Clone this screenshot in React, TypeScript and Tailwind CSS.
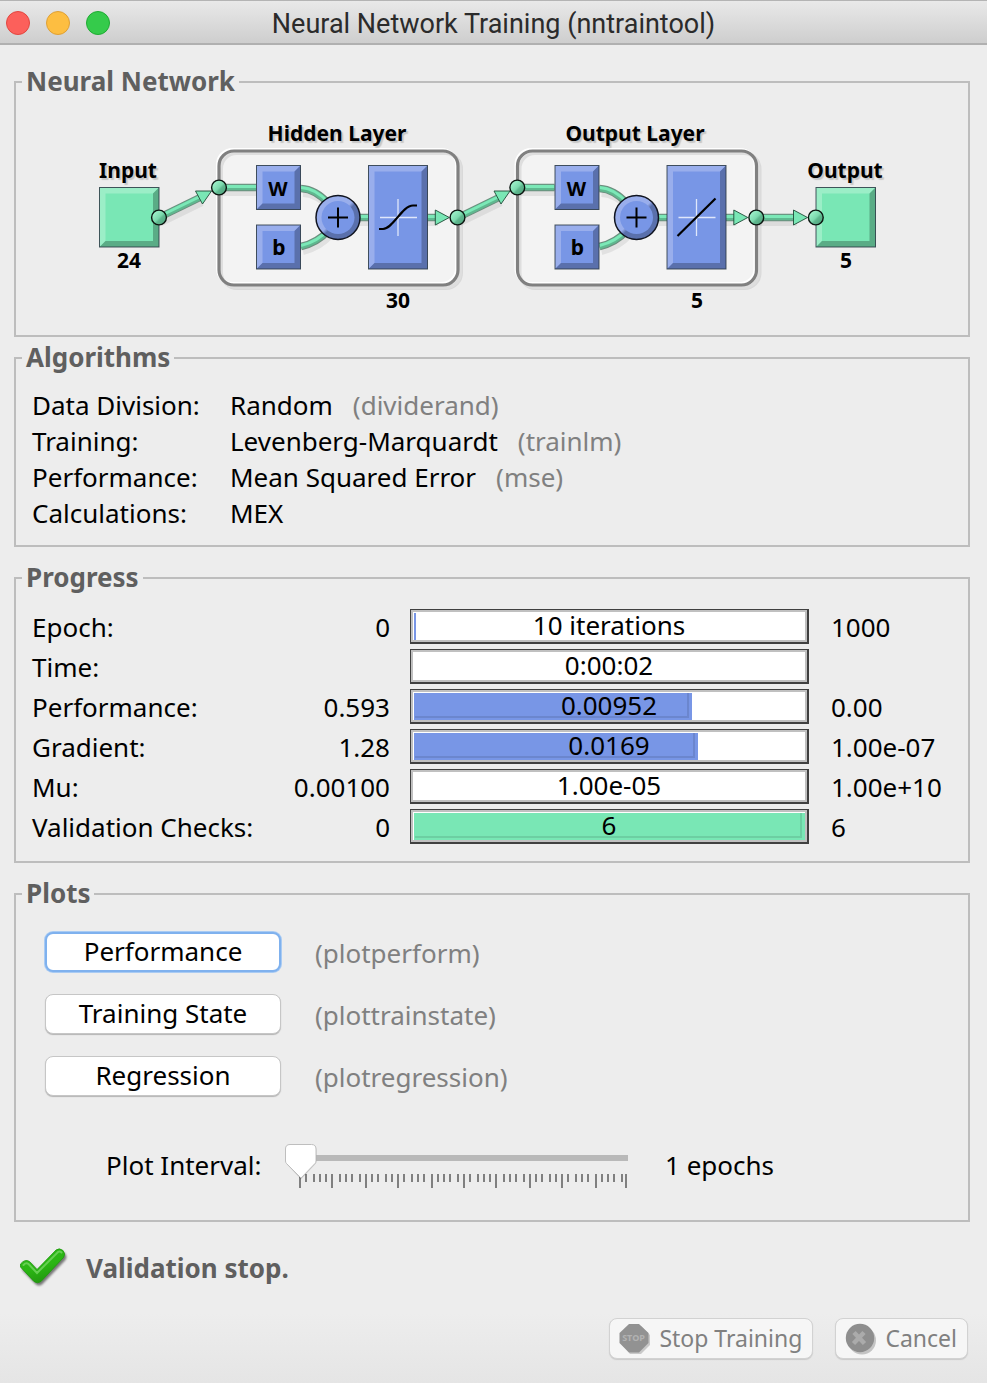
import { useState } from "react";
import type { ReactNode } from "react";

const GREEN = { main: "#79e7b5", light: "#9beec7", dark: "#5aac86" };
const BLUE = { main: "#7896e6", light: "#99aeec", dark: "#5a70ac" };
type Tone = typeof GREEN;

function Panel({ title, className, children }: { title: string; className: string; children: ReactNode }) {
  return (
    <fieldset className={`min-w-0 border-2 border-[#bdbdbd] ${className}`}>
      <legend className="ml-[6px] px-1 pb-[2px] text-[26px] leading-7 font-bold text-[#5f5f5f]">{title}</legend>
      {children}
    </fieldset>
  );
}

function Bevel({ x, y, w, h, tone }: { x: number; y: number; w: number; h: number; tone: Tone }) {
  const b = 6;
  return (
    <g>
      <rect x={x} y={y} width={w} height={h} fill={tone.main} />
      <polygon
        fill={tone.light}
        points={`${x},${y} ${x + w},${y} ${x + w - b},${y + b} ${x + b},${y + b} ${x + b},${y + h - b} ${x},${y + h}`}
      />
      <polygon
        fill={tone.dark}
        points={`${x + w},${y + h} ${x + w},${y} ${x + w - b},${y + b} ${x + w - b},${y + h - b} ${x + b},${y + h - b} ${x},${y + h}`}
      />
      <rect x={x} y={y} width={w} height={h} fill="none" stroke="#2c3a44" strokeOpacity="0.85" />
    </g>
  );
}

function Pipe({ d }: { d: string }) {
  return (
    <g fill="none">
      <path d={d} stroke="#000" strokeOpacity="0.07" strokeWidth="7" transform="translate(2 5)" />
      <path d={d} stroke="#6d8c7e" strokeWidth="7.5" />
      <path d={d} stroke="#5fb88f" strokeWidth="5.5" />
      <path d={d} stroke="#7be8b7" strokeWidth="3" transform="translate(0 -1)" />
    </g>
  );
}

function Knob({ x, y }: { x: number; y: number }) {
  return <circle cx={x} cy={y} r="7.4" fill="url(#knob)" stroke="#0b1510" strokeWidth="1.4" />;
}

function Arrow({ points }: { points: string }) {
  return <polygon points={points} fill="#79e7b5" stroke="#1f4a37" strokeWidth="0.9" />;
}

function Caption({ x, y, children }: { x: number; y: number; children: string }) {
  return (
    <text x={x} y={y} textAnchor="middle" fontSize="21" fontWeight="700" className="[text-shadow:2px_2px_1px_rgba(0,0,0,0.16)]">
      {children}
    </text>
  );
}

function Layer({ x, curve }: { x: number; curve: string }) {
  return (
    <g transform={`translate(${x} 0)`}>
      <rect x="222" y="154" width="239" height="134" rx="15" fill="none" stroke="#d9d9d9" strokeWidth="4" />
      <rect x="219" y="151" width="239" height="134" rx="15" fill="#f3f3f3" />
      <rect x="221.5" y="153.5" width="239" height="134" rx="15" fill="none" stroke="#dedede" strokeWidth="3" />
      <rect x="217.5" y="149.5" width="239" height="134" rx="15" fill="none" stroke="#fff" strokeWidth="3" />
      <rect x="219" y="151" width="239" height="134" rx="15" fill="none" stroke="#808080" strokeWidth="3.2" />
      <Pipe d="M219 187.5H256" />
      <Pipe d="M301 188.5C312 189 320 194 329 204" />
      <Pipe d="M301 246.5C312 244 320 240 329 230" />
      <Pipe d="M358 217.5H436" />
      <Bevel x={256.5} y={165.5} w={44} h={44} tone={BLUE} />
      <Bevel x={256.5} y={225} w={44} h={44} tone={BLUE} />
      <Bevel x={368.5} y={165.5} w={59} h={103.5} tone={BLUE} />
      <circle cx="338" cy="217.5" r="22" fill="url(#sum)" stroke="#101420" strokeWidth="1.5" />
      <circle cx="338" cy="217.5" r="16.5" fill="#7896e6" />
      <path d="M328 217.5h20M338 207.5v20" stroke="#000" strokeWidth="2" />
      <path d="M380 217.5h37M398 199v37" stroke="#dfe7fb" strokeWidth="1.3" />
      <path d={curve} stroke="#000" strokeWidth="2.2" fill="none" />
      <text x="278" y="196" textAnchor="middle" fontSize="20" fontWeight="700">W</text>
      <text x="279" y="255" textAnchor="middle" fontSize="21" fontWeight="700">b</text>
      <Arrow points="435.3,210 435.3,225 449.3,217.5" />
    </g>
  );
}

function NetworkDiagram() {
  return (
    <svg viewBox="92 97 800 238" className="mx-auto block h-[238px] w-full max-w-[800px]" role="img" aria-label="Network structure">
      <defs>
        <linearGradient id="knob" x1="0" y1="0" x2="1" y2="1">
          <stop offset="0.2" stopColor="#9beec7" />
          <stop offset="0.5" stopColor="#7bd9ad" />
          <stop offset="0.6" stopColor="#5fb88f" />
          <stop offset="1" stopColor="#4f9e7a" />
        </linearGradient>
        <linearGradient id="sum" x1="0" y1="0" x2="1" y2="1">
          <stop offset="0.48" stopColor="#99aeec" />
          <stop offset="0.54" stopColor="#5a70ac" />
        </linearGradient>
      </defs>
      <Layer x={0} curve="M379 229h4C393 229 402 205.500 413 205.500h4" />
      <Layer x={298.5} curve="M379 236L417 198.500" />
      <Bevel x={99.5} y={187.5} w={59.5} h={59.5} tone={GREEN} />
      <Bevel x={816} y={187.5} w={59.5} h={59.5} tone={GREEN} />
      <Pipe d="M159 217.500L200 197.500" />
      <Pipe d="M458 217.500L499 197.500" />
      <Pipe d="M756.500 217.500H795" />
      <Arrow points="195.5,191 211.500,191 202.500,204" />
      <Arrow points="494,191 510,191 501,204" />
      <Arrow points="793.5,210 793.5,225 807.5,217.5" />
      <Knob x={159} y={217.5} />
      <Knob x={219} y={187.5} />
      <Knob x={457.5} y={217.5} />
      <Knob x={517.3} y={187.5} />
      <Knob x={756.3} y={217.5} />
      <Knob x={815.8} y={217.5} />
      <Caption x={337} y={141}>Hidden Layer</Caption>
      <Caption x={635} y={141}>Output Layer</Caption>
      <Caption x={128} y={178}>Input</Caption>
      <Caption x={845} y={178}>Output</Caption>
      <g fontSize="21" fontWeight="700" textAnchor="middle">
        <text x="129" y="268">24</text>
        <text x="398" y="308">30</text>
        <text x="697" y="308">5</text>
        <text x="846" y="268">5</text>
      </g>
    </svg>
  );
}

const algorithms = [
  { name: "Data Division:", value: "Random", fn: "(dividerand)" },
  { name: "Training:", value: "Levenberg-Marquardt", fn: "(trainlm)" },
  { name: "Performance:", value: "Mean Squared Error", fn: "(mse)" },
  { name: "Calculations:", value: "MEX", fn: "" },
];

const progress = [
  { name: "Epoch:", from: "0", text: "10 iterations", to: "1000", fill: 0.5, done: false },
  { name: "Time:", from: "", text: "0:00:02", to: "", fill: 0, done: false },
  { name: "Performance:", from: "0.593", text: "0.00952", to: "0.00", fill: 71, done: false },
  { name: "Gradient:", from: "1.28", text: "0.0169", to: "1.00e-07", fill: 72.6, done: false },
  { name: "Mu:", from: "0.00100", text: "1.00e-05", to: "1.00e+10", fill: 0, done: false },
  { name: "Validation Checks:", from: "0", text: "6", to: "6", fill: 100, done: true },
];

function Bar({ text, fill, done }: { text: string; fill: number; done: boolean }) {
  return (
    <div className="h-[35px] border-t border-r-2 border-b-2 border-l border-[#404040]">
      <div className="relative h-full border-2 border-[#c0c0c0] bg-white pt-px pl-px">
        <div className={`relative h-full ${done ? "bg-[#79e7b5]" : "bg-[#7896e6]"}`} style={{ width: `${fill}%` }}>
          {fill > 1 && <div className="absolute top-0 right-[3px] bottom-[2px] left-px border-r-2 border-b-2 border-black/10" />}
        </div>
        <span className="absolute inset-0 text-center leading-[27px] text-black">{text}</span>
      </div>
    </div>
  );
}

const ticks = [
  14, 20, 28, 34, 40, 46, 54, 60, 66, 74, 80, 86, 92, 100, 106, 112, 118, 126, 132, 138, 146, 152, 158, 164, 172, 178,
  184, 192, 198, 204, 210, 218, 224, 230, 238, 244, 250, 256, 264, 270, 276, 282, 290, 296, 302, 310, 316, 322, 328,
  336, 340,
];

function IntervalSlider({ value, onChange }: { value: number; onChange: (v: number) => void }) {
  const shift = ((value - 1) / 50) * 326;
  return (
    <div className="relative h-[46px] w-[343px]">
      <svg viewBox="0 0 343 46" className="block h-full w-full" aria-hidden="true">
        <rect x="14" y="12" width="329" height="6" fill="#b9b9b9" />
        {ticks.map((x, i) => (
          <rect key={x} x={x} y="31" width="2" height={i % 5 === 0 ? 14 : 8} fill="#808080" />
        ))}
        <g transform={`translate(${shift} 0)`}>
          <path d="M5.500 2.500H26.500Q31.500 2.500 31.500 7.500V18Q31.500 20 30 21.500L16 36.500L2 21.500Q0.500 20 0.500 18V7.500Q0.500 2.500 5.500 2.500Z" fill="#000" fillOpacity="0.14" />
          <path d="M5 1.500H26.500Q31 1.500 31 6V18Q31 19.500 30 20.500L16 35L1.500 20.500Q0.500 19.500 0.500 18V6Q0.500 1.500 5 1.500Z" fill="#fff" stroke="#bebebe" />
        </g>
      </svg>
      <input
        id="interval"
        type="range"
        min={1}
        max={51}
        value={value}
        onChange={(e) => onChange(Number(e.target.value))}
        className="absolute inset-0 h-full w-full cursor-pointer opacity-0"
      />
    </div>
  );
}

function CheckMark() {
  return (
    <svg viewBox="0 0 50 44" className="h-[44px] w-[50px] shrink-0" aria-hidden="true">
      <defs>
        <linearGradient id="check" x1="0" y1="0" x2="0.4" y2="1">
          <stop offset="0" stopColor="#2fb51c" />
          <stop offset="0.6" stopColor="#2bb614" />
          <stop offset="1" stopColor="#239a10" />
        </linearGradient>
        <filter id="soft" x="-20%" y="-20%" width="150%" height="150%">
          <feGaussianBlur stdDeviation="1.3" />
        </filter>
      </defs>
      <path d="M0.500 17Q5 12 9.500 15L17 23L36 4Q39.500 1.500 43 4.500Q46.500 8 43.500 12L21 35.500Q17.500 38.500 14 35.500L1 22Z" fill="#000" fillOpacity="0.5" filter="url(#soft)" transform="translate(1.500 1.500)" />
      <path d="M0.500 17Q5 11.500 9.500 14.500L17 22.500L36 3Q39.500 0.500 43 3.500Q46 7 43.500 10.500L21 34.500Q17.500 37 14 34.500L0.500 20Z" fill="url(#check)" stroke="#1e9a0d" strokeWidth="0.8" />
      <path d="M3.500 18Q6 15 8.500 17L17 26L38 5Q40 4 41.500 5.500" fill="none" stroke="#65cf52" strokeWidth="2" strokeLinecap="round" />
    </svg>
  );
}

function StopIcon() {
  return (
    <svg viewBox="0 0 32 32" className="h-8 w-8 shrink-0" aria-hidden="true">
      <path d="M11 3H22L31 12V22L22 31H11L3 22V12Z" fill="#c9c9c9" />
      <path d="M10 1H20L29.500 10V20L20 29.500H10L0.500 20V10Z" fill="#929292" />
      <text x="14.500" y="18" textAnchor="middle" fontSize="9" fontWeight="700" fill="#b2b2b2">STOP</text>
    </svg>
  );
}

function CancelIcon() {
  return (
    <svg viewBox="0 0 32 32" className="h-8 w-8 shrink-0" aria-hidden="true">
      <circle cx="17" cy="17.500" r="14" fill="#c4c4c4" />
      <circle cx="15" cy="15" r="14.200" fill="#8e8e8e" />
      <path d="M9 9.500L19.500 20.500M19 9.500L8.500 20.500" stroke="#ababab" strokeWidth="4.500" />
    </svg>
  );
}

const plots = [
  { name: "Performance", fn: "(plotperform)" },
  { name: "Training State", fn: "(plottrainstate)" },
  { name: "Regression", fn: "(plotregression)" },
];

export default function App() {
  const [interval, setInterval] = useState(1);
  return (
    <div className="flex min-h-screen flex-col bg-[#ededed] bg-[linear-gradient(to_top,#e5e5e5,#ededed_70px)] font-['Noto_Sans','Lucida_Grande',sans-serif] text-[26px] text-black">
      <header className="relative flex h-[45px] items-center border-t border-b-2 border-t-[#b4b4b4] border-b-[#b0b0b0] bg-linear-to-b from-[#e9e9e9] to-[#cecece] px-[6px]">
        <div className="absolute flex gap-4 pt-[2px]">
          <button type="button" aria-label="Close" className="h-6 w-6 rounded-full border border-[#e2463f] bg-[#fc605b]" />
          <button type="button" aria-label="Minimize" className="h-6 w-6 rounded-full border border-[#dfa035] bg-[#fdbe41]" />
          <button type="button" aria-label="Zoom" className="h-6 w-6 rounded-full border border-[#1fab33] bg-[#35cb4b]" />
        </div>
        <h1 className="w-full pt-[3px] text-center font-['Roboto',sans-serif] text-[27px] leading-8 text-[#2b2b2b]">Neural Network Training (nntraintool)</h1>
      </header>

      <main className="flex flex-1 flex-col pt-[22px] pr-[17px] pl-[14px]">
        <Panel title="Neural Network" className="mb-[6px]">
          <NetworkDiagram />
        </Panel>

        <Panel title="Algorithms" className="mb-4">
          <dl className="grid grid-cols-[198px_1fr] px-4 pt-[14px] pb-[14px] leading-9">
            {algorithms.map((a) => (
              <div key={a.name} className="contents">
                <dt>{a.name}</dt>
                <dd className="flex gap-5">
                  <span>{a.value}</span>
                  {a.fn && <span className="text-[#808080]">{a.fn}</span>}
                </dd>
              </div>
            ))}
          </dl>
        </Panel>

        <Panel title="Progress" className="mb-4">
          <div className="pt-[15px] pb-[13px] pl-4">
            <table className="w-full table-fixed border-collapse leading-[38px]">
              <colgroup>
                <col className="w-[248px]" />
                <col className="w-[110px]" />
                <col />
                <col className="w-[159px]" />
              </colgroup>
              <tbody>
                {progress.map((p) => (
                  <tr key={p.name} className="h-10 align-top">
                    <th scope="row" className="p-0 text-left font-normal whitespace-nowrap">{p.name}</th>
                    <td className="p-0 text-right">{p.from}</td>
                    <td className="pt-px pr-0 pb-0 pl-5">
                      <Bar text={p.text} fill={p.fill} done={p.done} />
                    </td>
                    <td className="py-0 pr-0 pl-[22px]">{p.to}</td>
                  </tr>
                ))}
              </tbody>
            </table>
          </div>
        </Panel>

        <Panel title="Plots" className="mb-[25px]">
          <div className="flex flex-col gap-[22px] pt-[23px] pl-[29px]">
            {plots.map((p, i) => (
              <div key={p.name} className="flex h-10 items-center gap-[34px]">
                <button
                  type="button"
                  className={`flex h-10 w-[236px] items-center justify-center rounded-lg bg-white pb-[2px] ${
                    i === 0 ? "border-2 border-[#7fb1ee] shadow-[0_0_0_1px_#a9cbf3]" : "border border-[#c6c6c6] shadow-[0_1px_1px_#b4b4b4]"
                  }`}
                >
                  {p.name}
                </button>
                <span className="pt-[2px] text-[#808080]">{p.fn}</span>
              </div>
            ))}
          </div>
          <div className="flex items-start pt-[47px] pb-[31px] pl-[90px] leading-[44px]">
            <label htmlFor="interval" className="w-[179px]">Plot Interval:</label>
            <IntervalSlider value={interval} onChange={setInterval} />
            <output htmlFor="interval" className="pl-[37px]">{interval} epochs</output>
          </div>
        </Panel>

        <div className="flex items-center gap-4 pl-[6px]">
          <CheckMark />
          <p className="pb-[2px] leading-[42px] font-bold text-[#5f5f5f]">Validation stop.</p>
        </div>

        <footer className="mt-[27px] flex justify-end gap-[22px] pr-[2px] text-[23px] text-[#808080]">
          <button type="button" disabled className="flex h-[41px] items-center gap-2 rounded-lg border border-[#d2d2d2] bg-[#f6f6f6] pr-[10px] pl-[9px] shadow-[0_1px_1px_#cacaca]">
            <StopIcon />
            Stop Training
          </button>
          <button type="button" disabled className="flex h-[41px] items-center gap-2 rounded-lg border border-[#d2d2d2] bg-[#f6f6f6] pr-[10px] pl-[9px] shadow-[0_1px_1px_#cacaca]">
            <CancelIcon />
            Cancel
          </button>
        </footer>
      </main>
    </div>
  );
}
